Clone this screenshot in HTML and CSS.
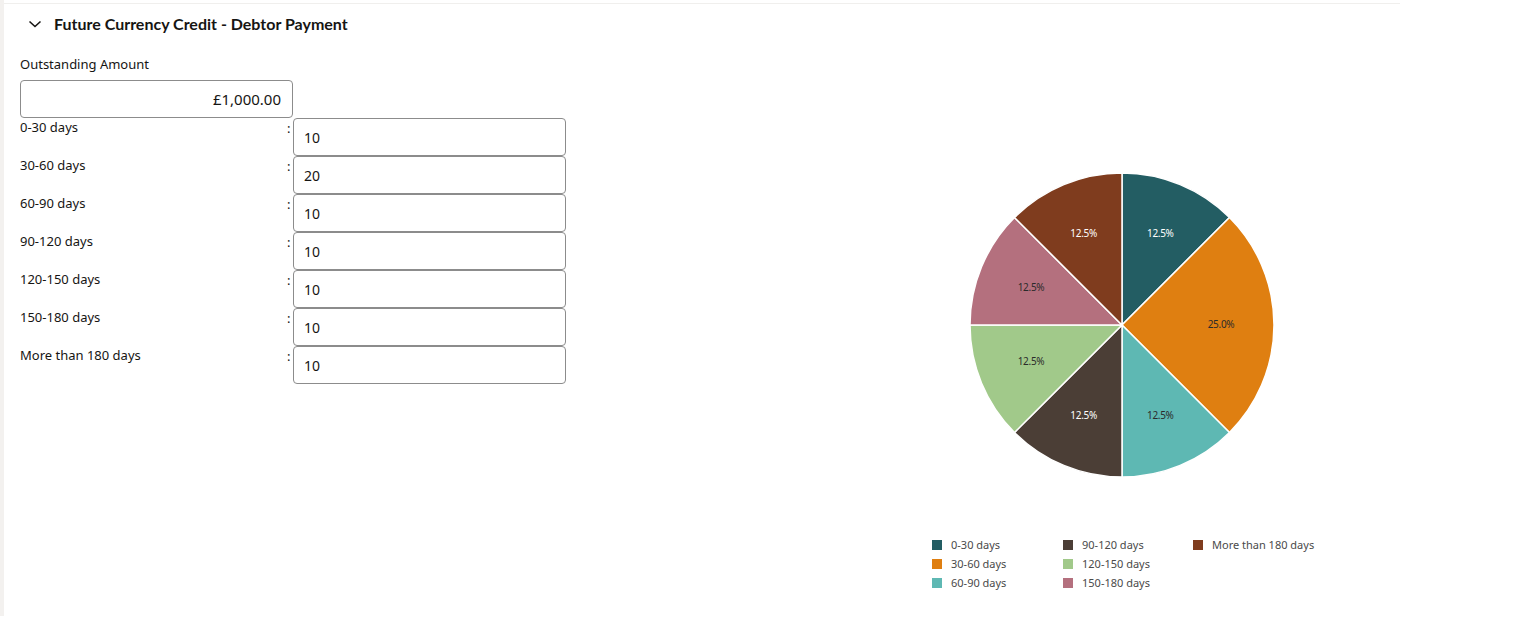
FILE: index.html
```html
<!DOCTYPE html>
<html lang="en">
<head>
<meta charset="utf-8">
<title>Future Currency Credit - Debtor Payment</title>
<link rel="stylesheet" href="styles.css">
</head>
<body>
<div class="page">
  <section class="section">
    <header class="header">
      <svg class="chevron" viewBox="0 0 16 16" width="16" height="16" aria-hidden="true"><path d="M2.5 5.5 L8 10.5 L13.5 5.5" fill="none" stroke="#161513" stroke-width="1.6"/></svg>
      <h2 class="title">Future Currency Credit - Debtor Payment</h2>
    </header>
    <div class="body">
      <div class="form">
        <label class="field-label">Outstanding Amount</label>
        <div class="amount">£1,000.00</div>
        <div class="rows">
          <div class="row"><span class="row-label">0-30 days</span><span class="colon">:</span><div class="input">10</div></div>
          <div class="row"><span class="row-label">30-60 days</span><span class="colon">:</span><div class="input">20</div></div>
          <div class="row"><span class="row-label">60-90 days</span><span class="colon">:</span><div class="input">10</div></div>
          <div class="row"><span class="row-label">90-120 days</span><span class="colon">:</span><div class="input">10</div></div>
          <div class="row"><span class="row-label">120-150 days</span><span class="colon">:</span><div class="input">10</div></div>
          <div class="row"><span class="row-label">150-180 days</span><span class="colon">:</span><div class="input">10</div></div>
          <div class="row"><span class="row-label">More than 180 days</span><span class="colon">:</span><div class="input">10</div></div>
        </div>
      </div>
      <div class="chart">
        <svg class="pie" viewBox="0 0 320 320" width="320" height="320">
          <g stroke="#ffffff" stroke-width="1.5" stroke-linejoin="round">
            <path d="M160 160 L160 8 A152 152 0 0 1 267.48 52.52 Z" fill="#235d63"/>
            <path d="M160 160 L267.48 52.52 A152 152 0 0 1 267.48 267.48 Z" fill="#df7f11"/>
            <path d="M160 160 L267.48 267.48 A152 152 0 0 1 160 312 Z" fill="#5eb8b3"/>
            <path d="M160 160 L160 312 A152 152 0 0 1 52.52 267.48 Z" fill="#4b3e36"/>
            <path d="M160 160 L52.52 267.48 A152 152 0 0 1 8 160 Z" fill="#a1c98a"/>
            <path d="M160 160 L8 160 A152 152 0 0 1 52.52 52.52 Z" fill="#b4707e"/>
            <path d="M160 160 L52.52 52.52 A152 152 0 0 1 160 8 Z" fill="#7f3c1e"/>
          </g>
          <g class="pie-labels" text-anchor="middle" dominant-baseline="central">
            <text x="198.3" y="67.6" fill="#ffffff">12.5%</text>
            <text x="259" y="159" fill="#2b2b2b">25.0%</text>
            <text x="198.3" y="250" fill="#2b2b2b">12.5%</text>
            <text x="121.7" y="250" fill="#ffffff">12.5%</text>
            <text x="69" y="196" fill="#2b2b2b">12.5%</text>
            <text x="69" y="121.7" fill="#2b2b2b">12.5%</text>
            <text x="121.7" y="67.6" fill="#ffffff">12.5%</text>
          </g>
        </svg>
        <ul class="legend">
          <li><span class="sw sw1"></span>0-30 days</li>
          <li><span class="sw sw4"></span>90-120 days</li>
          <li><span class="sw sw7"></span>More than 180 days</li>
          <li><span class="sw sw2"></span>30-60 days</li>
          <li><span class="sw sw5"></span>120-150 days</li>
          <li></li>
          <li><span class="sw sw3"></span>60-90 days</li>
          <li><span class="sw sw6"></span>150-180 days</li>
          <li></li>
        </ul>
      </div>
    </div>
  </section>
</div>
</body>
</html>
```
FILE: styles.css
```css
* { box-sizing: border-box; }
html, body { margin: 0; padding: 0; background: #ffffff; }
body {
  font-family: "Noto Sans", "Open Sans", sans-serif;
  color: #161513;
}
.page {
  height: 616px;
  border-left: 4px solid #f3f1ef;
  padding-top: 3px;
}
.section {
  width: 1396px;
  border-top: 1px solid #f0efed;
}
.header {
  display: flex;
  align-items: center;
  padding: 10px 0 0 23px;
  height: 30px;
}
.chevron { display: block; flex: none; }
.title {
  margin: 0 0 0 11px;
  font-family: "Lato", "Noto Sans", sans-serif;
  font-weight: 700;
  font-size: 16px;
  line-height: 20px;
  color: #161513;
}
.body {
  display: flex;
  padding-top: 21px;
}
.form {
  width: 562px;
  padding-left: 16px;
  flex: none;
}
.field-label {
  display: block;
  font-size: 13px;
  line-height: 18px;
  margin-bottom: 7px;
}
.amount {
  width: 273px;
  height: 38px;
  border: 1px solid #8c8c8c;
  border-radius: 4px;
  font-size: 15px;
  line-height: 36px;
  text-align: right;
  padding-right: 11px;
}
.rows { display: flex; flex-direction: column; }
.row {
  display: flex;
  height: 38px;
}
.row-label {
  width: 267px;
  font-size: 13px;
  line-height: 18px;
}
.colon {
  width: 6px;
  font-size: 13px;
  line-height: 18px;
  padding-top: 1px;
}
.input {
  width: 273px;
  height: 38px;
  border: 1px solid #8c8c8c;
  border-radius: 4px;
  font-size: 14px;
  line-height: 37px;
  padding-left: 10px;
}
.chart {
  width: 420px;
  margin-left: 346px;
  display: flex;
  flex-direction: column;
  align-items: center;
}
.pie {
  display: block;
  margin-top: 110px;
}
.pie-labels {
  font-family: "Noto Sans", sans-serif;
  font-size: 10px;
  letter-spacing: -0.3px;
}
.legend {
  list-style: none;
  margin: 50px 0 0 0;
  padding: 0;
  display: grid;
  grid-template-columns: 131px 130px 119px;
  font-size: 11px;
  line-height: 19px;
  color: #4a4a4a;
}
.legend li {
  display: flex;
  align-items: center;
  height: 19px;
  white-space: nowrap;
}
.sw {
  width: 10px;
  height: 10px;
  margin-right: 9px;
  flex: none;
}
.sw1 { background: #235d63; }
.sw2 { background: #df7f11; }
.sw3 { background: #5eb8b3; }
.sw4 { background: #4b3e36; }
.sw5 { background: #a1c98a; }
.sw6 { background: #b4707e; }
.sw7 { background: #7f3c1e; }
```
